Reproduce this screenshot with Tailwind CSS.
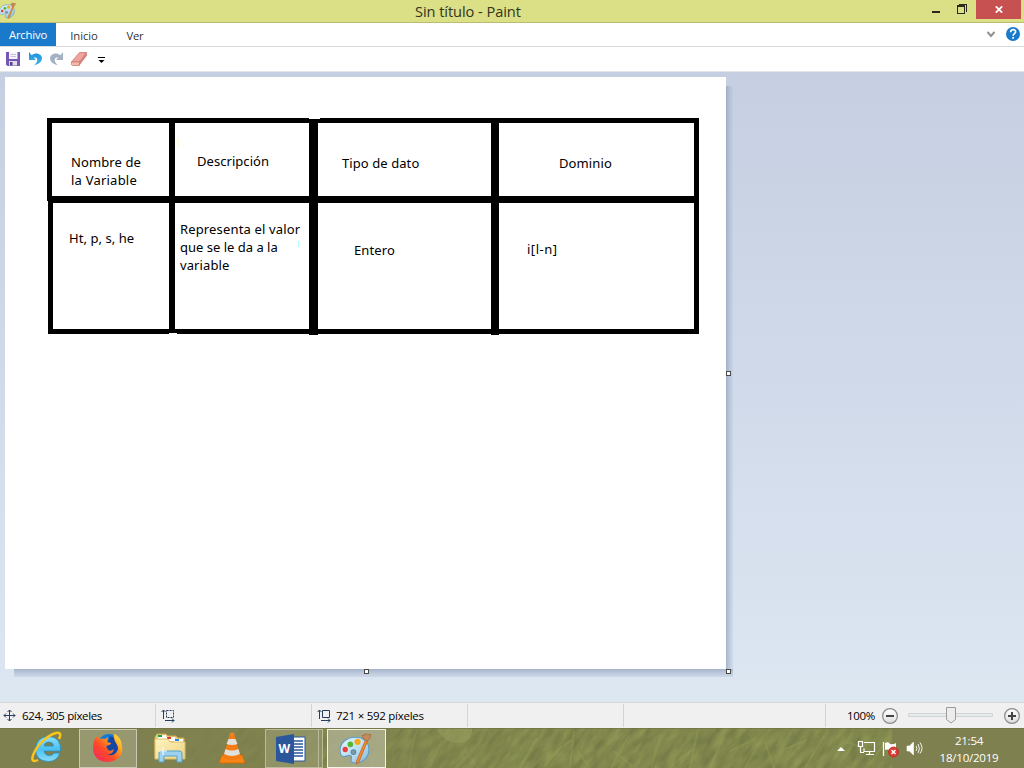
<!DOCTYPE html>
<html lang="es"><head><meta charset="utf-8"><title>Sin título - Paint</title>
<script src="https://cdn.jsdelivr.net/npm/@tailwindcss/browser@4"></script></head>
<body class="w-[1024px] h-[768px] overflow-hidden flex flex-col font-['Noto_Sans',sans-serif] text-[#1e1e1e]">
<svg class="absolute w-0 h-0"><defs>
<linearGradient id="pal" x1="0" y1="0" x2="1" y2="1"><stop offset="0" stop-color="#e6f5fc"/><stop offset=".6" stop-color="#b5dcf0"/><stop offset="1" stop-color="#79b5da"/></linearGradient>
<linearGradient id="ieg" x1="0" y1="0" x2="0" y2="1"><stop offset="0" stop-color="#8fe0fb"/><stop offset=".5" stop-color="#4bc0f0"/><stop offset="1" stop-color="#8adcf8"/></linearGradient>
<linearGradient id="ffg" x1="0" y1="1" x2="1" y2="0"><stop offset="0" stop-color="#f0206c"/><stop offset=".4" stop-color="#ff4a26"/><stop offset=".7" stop-color="#ffa51e"/><stop offset="1" stop-color="#fff04a"/></linearGradient>
<linearGradient id="fold" x1="0" y1="0" x2="1" y2="1"><stop offset="0" stop-color="#fff5c0"/><stop offset="1" stop-color="#ecd180"/></linearGradient>
<linearGradient id="und" x1="0" y1="0" x2="0" y2="1"><stop offset="0" stop-color="#1d8fd8"/><stop offset="1" stop-color="#3fb4f0"/></linearGradient>
<symbol id="palette" viewBox="0 0 32 32"><path d="M1 18C1 10 8 5 16 5s13 5 13 12c0 8-6 13-14 13-3 0-4-2-3-4 1-3-1-4-4-3-4 2-7 0-7-5z" fill="url(#pal)" stroke="#5a9cc8"/><circle cx="14" cy="19.500" r="2.300" fill="#8199a5" stroke="#5687a5"/><circle cx="6" cy="17" r="2.600" fill="#e8403c"/><circle cx="11" cy="12" r="2.700" fill="#54b830"/><circle cx="18" cy="9.500" r="3" fill="#f9a81c"/><path d="M26 7l2 1-9 22-2 1 0-3z" fill="#f08a30" stroke="#c65e14" stroke-width=".7"/><path d="M25.500 8c-2-1-3-3-3-5l2 .5 1-2 2 1 3.500 0c0 3-2 5-3.500 6z" fill="#c68a5b" stroke="#9b623a" stroke-width=".6"/></symbol>
</defs></svg>

<header class="h-[23px] shrink-0 bg-[#dbdf86] border-b border-[#b9bc71] flex items-start">
  <svg class="w-[17px] h-[17px] mt-[2px] -ml-px"><use href="#palette"/></svg>
  <div class="flex-1 flex justify-center text-[14.6px] leading-[23px] text-[#33341f] font-['Open_Sans']"><span class="-ml-[7px] w-[110px] whitespace-nowrap tracking-[-0.06px]">Sin título - Paint</span></div>
  <svg class="w-[45px] h-[22px]" fill="none" stroke="#2a2a1c" shape-rendering="crispEdges"><path d="M1 12h8" stroke-width="2"/><path d="M26.500 6.500h7v7h-7z" /><path d="M26 6h8" stroke-width="2"/><path d="M28 4.500h7.500V12"/></svg>
  <div class="w-[45px] h-[19px] mr-[3px] bg-[#c75050] flex items-center justify-center"><svg class="w-[8px] h-[7px]" viewBox="0 0 8 7"><path d="M.8.300l6.400 6.400M7.200.300L.8 6.700" stroke="#fff" stroke-width="1.700"/></svg></div>
</header>

<nav class="h-[24px] shrink-0 bg-white border-b border-[#dadbdc] flex text-[11.3px] leading-[24px] font-['Open_Sans'] text-[#333]">
  <div class="w-[56px] text-center text-white bg-[#1979ca] tracking-[-0.2px]">Archivo</div>
  <div class="w-[56px] text-center leading-[26px] tracking-[-0.1px]">Inicio</div>
  <div class="w-[46px] text-center leading-[26px] tracking-[-0.2px]">Ver</div>
  <svg class="ml-auto w-[38px] h-[23px]"><path d="M1.500 9l3.500 4 3.500-4" stroke="#929292" stroke-width="2" fill="none"/><circle cx="27" cy="11" r="7" fill="#1979ca"/><path d="M24.600 9.300c0-3.500 5-3.300 5-.6 0 1.900-2.500 1.900-2.500 4.100M27.100 14.100v1.700" stroke="#fff" stroke-width="1.700" fill="none"/></svg>
</nav>

<div class="h-[25px] shrink-0 bg-white border-b border-[#e2e6ea] flex">
<svg class="w-[120px] h-[24px]">
 <path d="M6 5h14v14H7.500L6 17.500z" fill="#7558b4"/><path d="M9 5h8.500v7H9z" fill="#f6f4fb"/><path d="M10.500 7.500h5.500M10.500 9.500h5.500" stroke="#c9c0dd"/><path d="M9 14h8v4.500H9z" fill="#dedbe8"/><path d="M10 15h2.500v3.500H10z" fill="#5a4190"/>
 <path d="M29 5v8h7l-2.300-2.400c4.300-1 5.300 3.400.3 8 7.500-2 9.800-7.300 6.500-10.500-2.500-2.400-6-2-9 .1z" fill="url(#und)"/>
 <path d="M63 5v8h-7l2.300-2.400c-4.300-1-5.300 3.400-.3 8-7.500-2-9.800-7.300-6.500-10.500 2.500-2.400 6-2 9 .1z" fill="#a3b1c5"/>
 <path d="M79.500 5.500h7L80 15h-8.500z" fill="#f0a29c" stroke="#c97b74" stroke-width=".8"/><path d="M71.500 15H80l-1 3.500h-6.500c-1 0-1.500-2-1-3.500z" fill="#f4bcb0" stroke="#c97b74" stroke-width=".8"/><path d="M80 15l6.500-9.500.2 3L79 18.500z" fill="#dc837e" stroke="#c0706c" stroke-width=".5"/>
 <path d="M98 10.500h7" stroke="#000"/><path d="M98.500 13h6l-3 3z"/>
</svg></div>

<main class="relative h-[630px] shrink-0 bg-linear-to-b from-[#c5cfe1] via-[#d0daea] to-[#dde7f2]">
  <svg class="absolute left-0 top-0 w-[740px] h-[610px]"><defs><linearGradient id="sr"><stop offset="0" stop-color="#92a2bd" stop-opacity=".75"/><stop offset="1" stop-color="#b2c0d6" stop-opacity=".25"/></linearGradient><linearGradient id="sb" x1="0" y1="0" x2="0" y2="1"><stop offset="0" stop-color="#92a2bd" stop-opacity=".75"/><stop offset="1" stop-color="#b2c0d6" stop-opacity=".35"/></linearGradient></defs><path d="M726 14h7v583h-7z" fill="url(#sr)"/><path d="M14 597h719v8H14z" fill="url(#sb)"/></svg>
  <div class="absolute left-[5px] top-[5px] w-[721px] h-[592px] bg-white font-['Noto_Sans',sans-serif] text-[13px] leading-[18px] text-black whitespace-nowrap">
    <svg class="absolute left-0 top-0 w-[721px] h-[592px]" viewBox="5 77 721 592" shape-rendering="crispEdges"><path d="M47 118h262v5H47zM309 119h11v4h-11zM320 118h379v5H320zM47 118h5v83h-5zM48 196h651v7H48zM48 200h5v134h-5zM169 118h6v215h-6zM309 119h9v216h-9zM491 118h8v217h-8zM694 118h5v216h-5zM48 329h121v5H48zM169 329h8v4h-8zM177 329h522v5H177z"/><path d="M298 241h1v6h-1z" fill="#b0fbff"/><path d="M178 138h1v9h-1z" fill="#fffbd0"/></svg>
    <div class="absolute left-[66px] top-[76px] tracking-[0.1px]">Nombre de<br><span class="tracking-[0.22px]">la Variable</span></div>
    <div class="absolute left-[192px] top-[75px] tracking-[0.05px]">Descripción</div>
    <div class="absolute left-[337px] top-[77px] tracking-[0.08px]">Tipo de dato</div>
    <div class="absolute left-[554px] top-[77px] tracking-[0.12px]">Dominio</div>
    <div class="absolute left-[64px] top-[152px] tracking-[0.05px]">Ht, p, s, he</div>
    <div class="absolute left-[175px] top-[143px]"><span class="tracking-[0.15px]">Representa el valor</span><br>que se le da a la<br><span class="tracking-[0.1px]">variable</span></div>
    <div class="absolute left-[349px] top-[164px] tracking-[0.1px]">Entero</div>
    <div class="absolute left-[522px] top-[163px] tracking-[0.5px]">i[l-n]</div>
  </div>
  <i class="absolute left-[726px] top-[299px] size-[5px] bg-white border border-[#484848]"></i>
  <i class="absolute left-[364px] top-[597px] size-[5px] bg-white border border-[#484848]"></i>
  <i class="absolute left-[726px] top-[597px] size-[5px] bg-white border border-[#484848]"></i>
</main>

<footer class="h-[26px] shrink-0 bg-[#f0f0f0] border-t border-[#d7d7d7] flex items-stretch text-[11.5px] leading-[26px] text-black font-['Open_Sans'] whitespace-nowrap">
  <div class="w-[156px] my-px border-r border-[#d4d4d4] flex"><svg class="w-[22px] h-[24px]" fill="none" stroke="#263f60"><path d="M4 11.500h11M9.500 6v11M6 9.500l-2 2 2 2M13 9.500l2 2-2 2M7.500 8l2-2 2 2M7.500 15l2 2 2-2"/></svg><span class="-mt-px tracking-[-0.36px]">624, 305 píxeles</span></div>
  <div class="w-[156px] my-px border-r border-[#d4d4d4]"><svg class="w-[30px] h-[24px]" fill="none" stroke="#263f60"><path d="M7.500 6v9M5.500 8l2-2 2 2M9 16.500h9M16 14.500l2 2-2 2"/><path d="M10.500 6.500h7v7h-7z" stroke-dasharray="2 1"/></svg></div>
  <div class="w-[156px] my-px border-r border-[#d4d4d4] flex"><svg class="w-[24px] h-[24px]" fill="none" stroke="#263f60"><path d="M7.500 6v9M5.500 8l2-2 2 2M9 16.500h9M16 14.500l2 2-2 2M10.500 6.500h7v7h-7z"/></svg><span class="-mt-px tracking-[-0.27px]">721 × 592 píxeles</span></div>
  <div class="w-[156px] my-px border-r border-[#d4d4d4]"></div>
  <div class="w-[202px] my-px border-r border-[#d4d4d4]"></div>
  <div class="flex-1 flex"><span class="ml-[21px] w-[29px] tracking-[-0.3px]">100%</span>
  <svg class="w-[148px] h-[25px]"><defs><linearGradient id="btn" x1="0" y1="0" x2="0" y2="1"><stop stop-color="#fff"/><stop offset="1" stop-color="#ddd"/></linearGradient></defs><g fill="url(#btn)" stroke="#8b8b8b" stroke-width="1.200"><circle cx="14" cy="13" r="7.400"/><circle cx="136" cy="13" r="7.400"/></g><path d="M10 13h8M132 13h8M136 9v8" stroke="#444" stroke-width="2"/><path d="M32.500 10.500h84v3h-84z" fill="#e7eaea" stroke="#d0d6d6"/><path d="M70.500 4.500h9v12l-4.500 3.500-4.500-3.500z" fill="#ececec" stroke="#9b9b9b"/></svg></div>
</footer>

<div class="relative h-[40px] shrink-0 bg-[#7f804f] flex text-white">
  <svg class="absolute inset-0 w-[1024px] h-[40px]"><defs>
    <filter id="grass" x="0" y="0" width="100%" height="100%" color-interpolation-filters="sRGB"><feTurbulence type="fractalNoise" baseFrequency=".12 .06" numOctaves="3" seed="8"/><feColorMatrix values=".14 .06 0 0 .405  .15 .06 0 0 .425  .07 .05 0 0 .24  0 0 0 0 1"/></filter>
    <linearGradient id="fade"><stop offset="0" stop-color="#7f804f"/><stop offset=".13" stop-color="#7f804f"/><stop offset=".38" stop-color="#7f804f" stop-opacity=".35"/><stop offset=".5" stop-color="#7f804f" stop-opacity="0"/></linearGradient></defs>
    <g transform="translate(0 -30) skewX(-32)"><rect x="60" width="950" height="90" filter="url(#grass)"/></g>
    <g fill="none" stroke="#97a058" stroke-opacity=".35" stroke-width="2"><path d="M409 40q4-28 8-38M430 39l12-27M455 40l27-28M478 40l-14-19M520 40l17-30M544 38q18-23 30-26M570 40l4-37M589 39l-12-17M611 40l18-33M632 38l-18-15M651 40l10-34M671 38l22-17M690 40l8-38M710 39l14-31M730 23l25-12M745 40l16-28M774 40l-9-26M785 21l22-9M805 40l19-32M835 30l18-25M844 13l28 10M870 36l16-23"/></g>
    <path d="M436 0h36q1 15-16 15Q444 14 436 0z" fill="#a5a867" opacity=".45"/>
    <path d="M0 0h1024v40H0z" fill="url(#fade)"/><path d="M892 0h132v40H892z" fill="#7f804f"/><path d="M0 .5h1024" stroke="#6d6f43" stroke-opacity=".6"/>
  </svg>
  <div class="relative w-[79px] h-[40px]"><svg class="ml-[30px] mt-[3px]" width="34" height="34" viewBox="0 0 34 34"><path d="M30.500 20H14q1 4.500 5.500 4.500 3 0 4.500-2.500h6Q27 30.500 18.500 30.500 5.500 30 5.500 18 6.500 6 18.500 5.500 31.500 6 30.500 20zM14 15h9.500q-.5-4-4.700-4T14 15z" fill="url(#ieg)" stroke="#1d8fc9" stroke-width=".8" fill-rule="evenodd"/><path d="M8 29C2 32 1 28 4 22 8 13 18 4 26 2c5-1 5 2 3 6" fill="none" stroke="#f8c51c" stroke-width="2.500"/></svg></div>
  <div class="relative w-[58px] h-[39px] mt-px bg-[#b5b69a]/45 border border-[#d6d7c4]/80 flex items-center justify-center"><svg class="-mt-px" width="32" height="32" viewBox="0 0 32 32"><circle cx="17" cy="13" r="11" fill="#1578d4"/><path d="M18 4q8 2 9 11l-5 9-10-1z" fill="#1746a2"/><path d="M5 4l3 3q3-1 5 0l3-2-1 5 4 1q0 2-5 3l2 4q3 2 6-1-1 6-7 5 5 3 9-1 4-4 0-10-3-5-2-9c4 1 8 6 8 13 2 6-4 15-14 15S1 24 1 16Q1 9 5 4z" fill="url(#ffg)"/></svg></div>
  <div class="relative w-[66px]"><svg class="ml-[17px] mt-[5px]" width="32" height="32" viewBox="0 0 32 32"><path d="M1 4l2-3h9l2 2h8l2 2h6v20H1z" fill="#ead07a" stroke="#c9a94e"/><path d="M4 2h8v4H4zM12 4h9v4h-9zM20 6h9v3h-9z" fill="#fff"/><path d="M4 2h4v2H4z" fill="#16a44a"/><path d="M13 4h4v2h-4z" fill="#d83c30"/><path d="M21 6h4v2h-4z" fill="#268dde"/><path d="M1 6h13l2 3h15v17H1z" fill="url(#fold)" stroke="#dbbf68"/><path d="M5 29V20q0-2 3-2h17q3 0 3 2v9h-5v-6H10v6z" fill="#9cd2ef" stroke="#58a1cf"/><path d="M5 18h8M9 14v8" stroke="#fff" fill="none"/></svg></div>
  <div class="relative w-[62px]"><svg class="ml-[15px] mt-[4px]" width="28" height="32" viewBox="0 0 28 32"><path d="M4 23h20l3 8H1z" fill="#f48716" stroke="#d96806"/><path d="M12 2h4l7 24q-9 4-18 0z" fill="#f47c13"/><path d="M10.500 7h7l2 5q-5 2-11 0zM7.500 17q6.500 3 13 0l1.400 5q-8 4-15.800 0z" fill="#e0e0dd"/><path d="M12 1q2-1 4 0l.6 3h-5.200z" fill="#f08124"/></svg></div>
  <div class="relative w-[62px] h-[39px] mt-px flex"><div class="w-[54px] bg-[#a4a680]/45 border border-[#b9bb9b] flex justify-center"><svg class="mt-[3px] -ml-[2px]" width="32" height="32" viewBox="0 0 32 32"><path d="M14 4h16v24H14z" fill="#fff" stroke="#2b579a"/><path d="M18 8h10M18 11h10M18 14h10M18 17h10M18 20h10M18 23h10" stroke="#2b579a" stroke-width="1.300"/><path d="M1 4l18-3v30L1 28z" fill="#2b579a"/><text x="3.500" y="20" font-family="Open Sans" font-size="12" font-weight="700" fill="#fff">W</text></svg></div><div class="w-[4px] border-y border-r border-[#b9bb9b] bg-[#9b9d72]/50"></div></div>
  <div class="relative w-[59px] h-[39px] mt-px bg-[#b7b89b]/70 border border-[#f2f2e8] flex items-center justify-center"><svg width="33" height="33" class="-ml-[3px]"><use href="#palette"/></svg></div>
  <div class="relative ml-auto flex"><svg width="92" height="40" fill="none" stroke="#fff"><path d="M6 23l4-4 4 4z" fill="#fff" stroke="none"/><path d="M33 14.500h10.500v9H33v-3M35 26.500h8M38.500 24v2M27.500 13.500h4v5h-4zM29.500 18.500v6h3.500" stroke-width="1.200"/><path d="M52.500 14v14" stroke-width="1.300"/><path d="M54 15q4-2 5 1 3 1 6-1v8q-5 2-6-1-3-1-5 0z" fill="#fff" stroke="none"/><circle cx="62.500" cy="24" r="5" fill="#df3a31" stroke="#b92722" stroke-width=".7"/><path d="M60.500 22l4 4m0-4l-4 4" stroke-width="1.500"/><path d="M76 18h2.500l4-4v13l-4-4H76z" fill="#fff" stroke-width=".6"/><path d="M85 18q2 3 0 5M87 16q3 5 0 9M89 14.500q4 6 0 11" stroke-width=".9"/></svg>
  <div class="ml-[4px] w-[84px] mr-[13px] pt-[4px] text-center text-[11.6px] leading-[17px] tracking-[-0.27px] font-['Open_Sans'] whitespace-nowrap">21:54<br>18/10/2019</div></div>
</div>
</body></html>
